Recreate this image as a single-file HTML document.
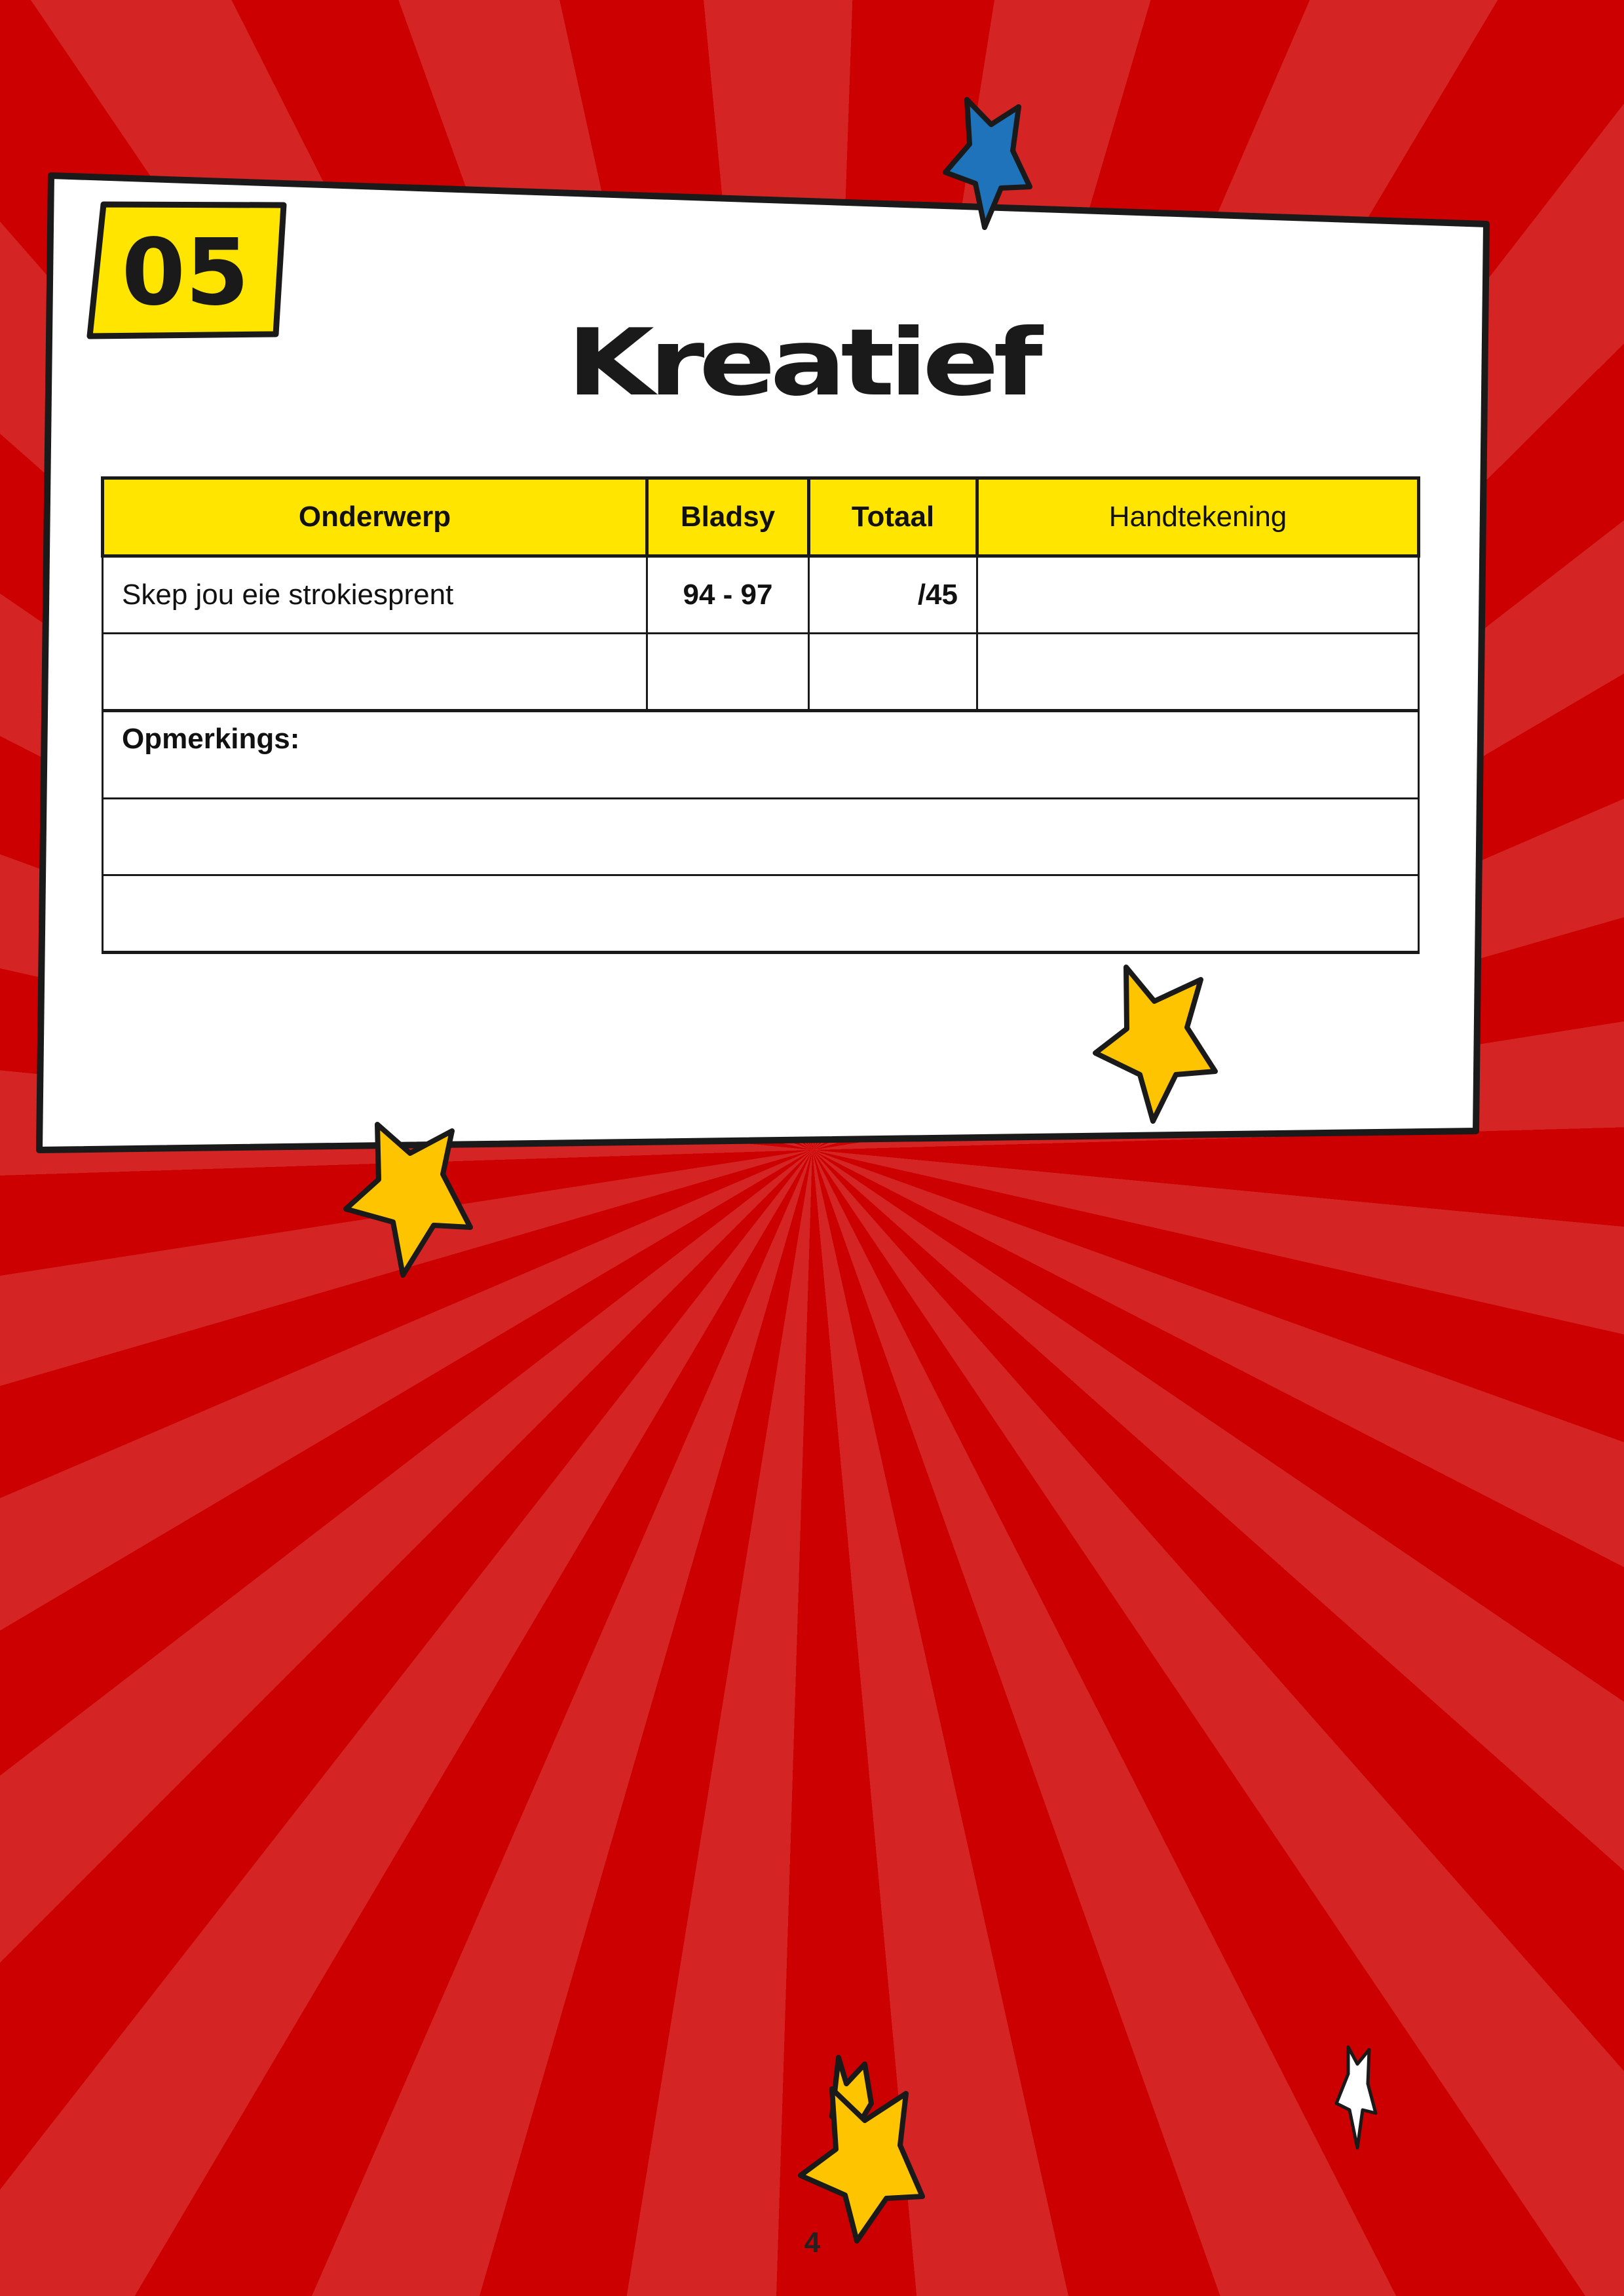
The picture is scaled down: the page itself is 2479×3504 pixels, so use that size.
<!DOCTYPE html>
<html><head><meta charset="utf-8">
<style>
html,body{margin:0;padding:0}
body{width:2479px;height:3504px;position:relative;overflow:hidden;
background:repeating-conic-gradient(from 2deg at 1240px 1755px,#cc0000 0deg 7deg,#d42424 7deg 14.4deg);}
svg{position:absolute;left:0;top:0}
.t{position:absolute;left:154px;top:727px;width:2014px;border-collapse:collapse;font-family:"Liberation Sans",sans-serif;font-size:44px;color:#111}
.t td{border:3px solid #1a1a1a;height:114px;padding:0 28px;}
.t tr.h td{background:#ffe500;font-weight:bold;text-align:center;border-width:5px}
</style></head><body>
<svg width="2479" height="3504">
<polygon points="78,268 2269,342 2253,1726 60,1755" fill="#fff" stroke="#1a1a1a" stroke-width="10" stroke-linejoin="round"/>
<polygon points="158,312 433,313 421,510 137,513" fill="#ffe500" stroke="#1a1a1a" stroke-width="9" stroke-linejoin="round"/>
<text x="283" y="464" text-anchor="middle" font-family="DejaVu Sans" font-weight="bold" font-size="140" fill="#1a1a1a">05</text>
<text x="0" y="0" text-anchor="middle" font-family="DejaVu Sans" font-weight="bold" font-size="160" fill="#1a1a1a" letter-spacing="-8" transform="translate(1224,602) scale(1.08,0.88)">Kreatief</text>
<g stroke="#1a1a1a" stroke-width="8" stroke-linejoin="round">
<polygon fill="#1e73bb" points="1476,152 1513,190 1555,163 1546,230 1572,285 1528,287 1503,347 1489,280 1443,263 1480,220"/>
<polygon fill="#ffc400" points="1719,1476 1762,1528 1833,1495 1812,1568 1855,1635 1795,1640 1760,1711 1740,1640 1672,1607 1720,1570"/>
<polygon fill="#ffc400" points="576,1716 626,1760 690,1726 676,1792 718,1873 662,1870 615,1946 600,1865 528,1845 578,1800"/>
<polygon fill="#ffc400" points="1280,3140 1292,3180 1320,3150 1330,3210 1300,3260 1270,3230"/>
<polygon fill="#ffc400" points="1270,3188 1320,3236 1383,3195 1374,3274 1408,3352 1353,3355 1308,3420 1290,3350 1222,3320 1276,3280"/>
<polygon fill="#fff" points="2058,3124 2072,3150 2090,3128 2088,3180 2100,3225 2080,3220 2072,3278 2060,3220 2040,3210 2058,3165" stroke-width="5"/>
</g>
<text x="1240" y="3437" text-anchor="middle" font-family="Liberation Sans" font-weight="bold" font-size="44" fill="#222">4</text>
</svg>
<table class="t">
<tr class="h"><td style="width:770px">Onderwerp</td><td style="width:186px">Bladsy</td><td style="width:196px">Totaal</td><td style="font-weight:normal">Handtekening</td></tr>
<tr><td>Skep jou eie strokiesprent</td><td style="text-align:center;font-weight:bold">94 - 97</td><td style="text-align:right;font-weight:bold">/45</td><td></td></tr>
<tr><td></td><td></td><td></td><td></td></tr>
<tr><td colspan="4" style="font-weight:bold;vertical-align:top;padding-top:16px;border-top-width:5px">Opmerkings:</td></tr>
<tr><td colspan="4"></td></tr>
<tr><td colspan="4" style="border-bottom-width:5px"></td></tr>
</table>
</body></html>
